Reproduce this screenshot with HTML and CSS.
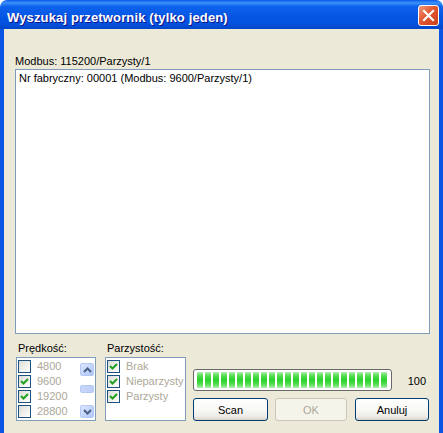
FILE: index.html
```html
<!DOCTYPE html>
<html>
<head>
<meta charset="utf-8">
<link rel="stylesheet" href="styles.css">
</head>
<body>
<div class="window">
  <div class="titlebar">
    <span class="title">Wyszukaj przetwornik (tylko jeden)</span>
    <div class="close">
      <svg width="13" height="13" viewBox="0 0 13 13"><path d="M2 2 L11 11 M11 2 L2 11" stroke="#fff" stroke-width="2.2" stroke-linecap="square"/></svg>
    </div>
  </div>
  <div class="client">
    <div class="label">Modbus: 115200/Parzysty/1</div>
    <div class="listbox">
      <div class="item">Nr fabryczny: 00001 (Modbus: 9600/Parzysty/1)</div>
    </div>
    <div class="bottom">
      <div class="group speed">
        <div class="glabel">Prędkość:</div>
        <div class="checklist">
          <div class="items">
            <div class="row"><span class="cb"></span><span class="txt">4800</span></div>
            <div class="row"><span class="cb on"><svg width="11" height="11" viewBox="0 0 11 11"><path d="M2 5 L4.5 7.5 L9 3" fill="none" stroke="#21A121" stroke-width="2"/></svg></span><span class="txt">9600</span></div>
            <div class="row"><span class="cb on"><svg width="11" height="11" viewBox="0 0 11 11"><path d="M2 5 L4.5 7.5 L9 3" fill="none" stroke="#21A121" stroke-width="2"/></svg></span><span class="txt">19200</span></div>
            <div class="row"><span class="cb"></span><span class="txt">28800</span></div>
          </div>
          <div class="scrollbar">
            <div class="sbtn"><svg width="9" height="6" viewBox="0 0 9 6"><path d="M1 5 L4.5 1.5 L8 5" fill="none" stroke="#4D6185" stroke-width="2"/></svg></div>
            <div class="track"><div class="thumb"></div></div>
            <div class="sbtn"><svg width="9" height="6" viewBox="0 0 9 6"><path d="M1 1 L4.5 4.5 L8 1" fill="none" stroke="#4D6185" stroke-width="2"/></svg></div>
          </div>
        </div>
      </div>
      <div class="group parity">
        <div class="glabel">Parzystość:</div>
        <div class="checklist">
          <div class="items">
            <div class="row"><span class="cb on"><svg width="11" height="11" viewBox="0 0 11 11"><path d="M2 5 L4.5 7.5 L9 3" fill="none" stroke="#21A121" stroke-width="2"/></svg></span><span class="txt">Brak</span></div>
            <div class="row"><span class="cb on"><svg width="11" height="11" viewBox="0 0 11 11"><path d="M2 5 L4.5 7.5 L9 3" fill="none" stroke="#21A121" stroke-width="2"/></svg></span><span class="txt">Nieparzysty</span></div>
            <div class="row"><span class="cb on"><svg width="11" height="11" viewBox="0 0 11 11"><path d="M2 5 L4.5 7.5 L9 3" fill="none" stroke="#21A121" stroke-width="2"/></svg></span><span class="txt">Parzysty</span></div>
          </div>
        </div>
      </div>
      <div class="group actions">
        <div class="progressrow">
          <div class="progress"><div class="fill"></div></div>
          <span class="pct">100</span>
        </div>
        <div class="buttons">
          <div class="btn scan">Scan</div>
          <div class="btn ok disabled">OK</div>
          <div class="btn cancel">Anuluj</div>
        </div>
      </div>
    </div>
  </div>
</div>
</body>
</html>
```

FILE: styles.css
```css
html, body {
  margin: 0;
  padding: 0;
  background: #ffffff;
}
.window {
  width: 443px;
  height: 433px;
  display: flex;
  flex-direction: column;
  font-family: "Liberation Sans", Arial, sans-serif;
  font-size: 11px;
  color: #000;
}
.titlebar {
  height: 29px;
  box-sizing: border-box;
  border-radius: 7px 7px 0 0;
  background: linear-gradient(to bottom, #0A5AE9 0%, #3D92FA 10%, #0E63EC 22%, #0556E5 55%, #0352DF 80%, #0246C8 100%);
  display: flex;
  align-items: flex-start;
  padding: 0 4px 0 7px;
}
.title {
  flex: 1;
  color: #fff;
  font-weight: bold;
  font-size: 13px;
  letter-spacing: 0.15px;
  line-height: 16px;
  padding-top: 10px;
  text-shadow: 1px 1px #0F1089;
}
.close {
  margin-top: 5px;
  width: 21px;
  height: 21px;
  box-sizing: border-box;
  border: 1px solid #fff;
  border-radius: 3px;
  background: linear-gradient(135deg, #F09A7C 0%, #E3572F 45%, #C9401C 100%);
  display: flex;
  align-items: center;
  justify-content: center;
}
.client {
  flex: 1;
  background: #ECE9D8;
  border-left: 4px solid #0A55E3;
  border-right: 4px solid #0A55E3;
  padding: 26px 0 0 11px;
  display: flex;
  flex-direction: column;
}
.label {
  height: 14px;
  line-height: 13px;
}
.listbox {
  width: 415px;
  height: 265px;
  box-sizing: border-box;
  border: 1px solid #7F9DB9;
  background: #fff;
  padding: 2px 3px;
}
.item {
  line-height: 13px;
}
.bottom {
  display: flex;
  margin-top: 8px;
}
.group {
  display: flex;
  flex-direction: column;
}
.glabel {
  height: 15px;
  line-height: 13px;
  padding-left: 2px;
}
.speed {
  margin-left: 1px;
  width: 80px;
}
.parity {
  margin-left: 9px;
  width: 81px;
}
.checklist {
  height: 64px;
  box-sizing: border-box;
  border: 1px solid #7F9DB9;
  background: #fff;
  display: flex;
}
.items {
  flex: 1;
  padding-top: 1px;
}
.row {
  height: 15px;
  display: flex;
  align-items: center;
  padding-left: 1px;
}
.cb {
  width: 13px;
  height: 13px;
  box-sizing: border-box;
  border: 1px solid #1C5180;
  background: linear-gradient(135deg, #DCDCD7 0%, #F2F2EE 60%, #FFFFFF 100%);
  display: flex;
  align-items: center;
  justify-content: center;
}
.txt {
  color: #ACA899;
  margin-left: 6px;
  line-height: 13px;
}
.scrollbar {
  width: 15px;
  display: flex;
  flex-direction: column;
  padding: 5px 1px 2px 0;
  box-sizing: border-box;
}
.sbtn {
  height: 13px;
  box-sizing: border-box;
  border: 1px solid #B4C8F6;
  border-radius: 2px;
  background: linear-gradient(135deg, #DCE6FD 0%, #C1D3FB 60%, #B0C6F6 100%);
  display: flex;
  align-items: center;
  justify-content: center;
}
.track {
  flex: 1;
  display: flex;
  flex-direction: column;
  justify-content: center;
  padding: 8px 0 11px;
}
.thumb {
  height: 8px;
  box-sizing: border-box;
  border: 1px solid #B4C8F6;
  border-radius: 2px;
  background: linear-gradient(to right, #CAD8FB, #BCCFFA);
}
.actions {
  margin-left: 7px;
  width: 236px;
  padding-top: 27px;
}
.progressrow {
  display: flex;
  align-items: center;
  height: 22px;
}
.progress {
  width: 199px;
  height: 22px;
  box-sizing: border-box;
  border: 1px solid #686868;
  border-radius: 3px;
  background: #fff;
  padding: 2px 3px;
}
.fill {
  height: 100%;
  background:
    repeating-linear-gradient(to right, transparent 0, transparent 6px, #fff 6px, #fff 8px),
    linear-gradient(to bottom, #B0EEB0 0%, #4FDB4F 25%, #2BD32B 50%, #4FDB4F 75%, #B0EEB0 100%);
}
.pct {
  flex: 1;
  text-align: right;
  padding-right: 3px;
  line-height: 13px;
  padding-top: 3px;
}
.buttons {
  display: flex;
  margin-top: 7px;
}
.btn {
  height: 23px;
  box-sizing: border-box;
  border: 1px solid #003C74;
  border-radius: 3px;
  background: linear-gradient(to bottom, #FFFFFF 0%, #F8F8F5 50%, #ECEBE6 85%, #D6D0C5 100%);
  display: flex;
  align-items: center;
  justify-content: center;
}
.scan {
  width: 75px;
}
.ok {
  width: 72px;
  margin-left: 7px;
}
.cancel {
  width: 74px;
  margin-left: 8px;
}
.disabled {
  border-color: #C9C7BA;
  background: #F5F4EA;
  color: #ACA899;
}
```
